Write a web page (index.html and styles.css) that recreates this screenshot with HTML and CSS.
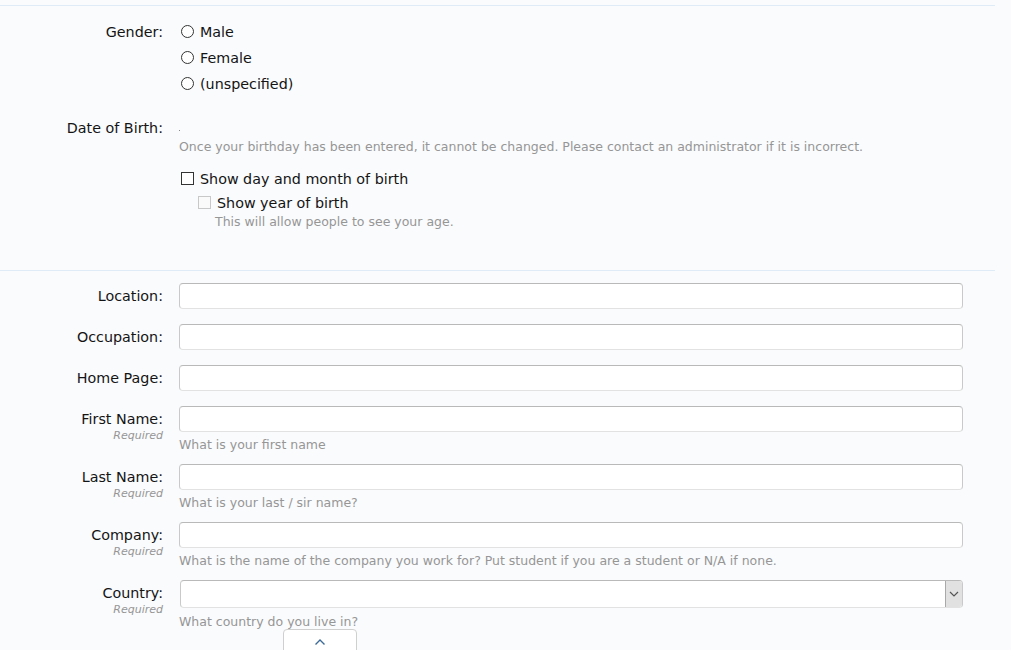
FILE: index.html
```html
<!DOCTYPE html>
<html>
<head>
<meta charset="utf-8">
<link rel="stylesheet" href="styles.css">
</head>
<body>
<div class="wrap">
  <section class="block block-top">
    <div class="row">
      <div class="label">Gender:</div>
      <div class="field">
        <div class="opt"><span class="radio"></span>Male</div>
        <div class="opt"><span class="radio"></span>Female</div>
        <div class="opt"><span class="radio"></span>(unspecified)</div>
      </div>
    </div>
    <div class="row row-dob">
      <div class="label">Date of Birth:</div>
      <div class="field">
        <div class="dob-line"><span class="dot"></span></div>
        <div class="hint">Once your birthday has been entered, it cannot be changed. Please contact an administrator if it is incorrect.</div>
        <div class="check"><span class="box"></span>Show day and month of birth</div>
        <div class="check sub"><span class="box disabled"></span>Show year of birth</div>
        <div class="hint sub-hint">This will allow people to see your age.</div>
      </div>
    </div>
  </section>
  <section class="block block-fields">
    <div class="row frow">
      <div class="label">Location:</div>
      <div class="field"><div class="input"></div></div>
    </div>
    <div class="row frow">
      <div class="label">Occupation:</div>
      <div class="field"><div class="input"></div></div>
    </div>
    <div class="row frow">
      <div class="label">Home Page:</div>
      <div class="field"><div class="input"></div></div>
    </div>
    <div class="row frow">
      <div class="label">First Name:<span class="req">Required</span></div>
      <div class="field"><div class="input"></div><div class="hint">What is your first name</div></div>
    </div>
    <div class="row frow">
      <div class="label">Last Name:<span class="req">Required</span></div>
      <div class="field"><div class="input"></div><div class="hint">What is your last / sir name?</div></div>
    </div>
    <div class="row frow">
      <div class="label">Company:<span class="req">Required</span></div>
      <div class="field"><div class="input"></div><div class="hint">What is the name of the company you work for? Put student if you are a student or N/A if none.</div></div>
    </div>
    <div class="row frow">
      <div class="label">Country:<span class="req">Required</span></div>
      <div class="field">
        <div class="select"><span class="arrow"><svg width="10" height="6" viewBox="0 0 10 6"><polyline points="1,1 5,5 9,1" fill="none" stroke="#555" stroke-width="1.2"/></svg></span></div>
        <div class="hint">What country do you live in?</div>
      </div>
    </div>
  </section>
</div>
<div class="totop"><svg width="12" height="8" viewBox="0 0 12 8"><polyline points="1.5,6.5 6,2 10.5,6.5" fill="none" stroke="#3c6a98" stroke-width="1.4"/></svg></div>
</body>
</html>
```
FILE: styles.css
```css
html, body {
  margin: 0;
  padding: 0;
  background: #fafbfd;
  height: 100%;
  overflow: hidden;
}
body {
  font-family: "DejaVu Sans", Verdana, sans-serif;
  font-size: 14.3px;
  color: #141414;
}
.wrap {
  width: 995px;
  padding-top: 5px;
}
.block {
  border-top: 1px solid #dfecf7;
}
.block-top {
  padding-top: 13px;
  box-sizing: border-box;
  height: 265px;
}
.row {
  display: grid;
  grid-template-columns: 163px 1fr;
  column-gap: 16px;
}
.label {
  text-align: right;
  line-height: 26px;
  display: flex;
  flex-direction: column;
  align-items: flex-end;
}
.field {
  width: 784px;
}
.opt {
  height: 26px;
  display: flex;
  align-items: center;
  line-height: 26px;
}
.radio {
  width: 11px;
  height: 11px;
  border: 1px solid #333;
  border-radius: 50%;
  background: #fff;
  margin: 0 6px 0 2px;
  position: relative;
  top: -1px;
}
.row-dob {
  margin-top: 18px;
}
.dob-line {
  height: 24px;
  position: relative;
}
.dot {
  display: block;
  width: 1px;
  height: 1px;
  background: #888;
  position: absolute;
  left: 0;
  top: 15px;
}
.hint {
  font-size: 12.5px;
  color: #969696;
  line-height: 16px;
  white-space: nowrap;
}
.check {
  height: 24px;
  display: flex;
  align-items: center;
}
.dob-line + .hint + .check {
  margin-top: 12px;
}
.box {
  width: 11px;
  height: 11px;
  border: 1px solid #333;
  background: #fff;
  margin: 0 6px 0 2px;
  position: relative;
  top: -1px;
}
.box.disabled {
  border-color: #c8c8c8;
  background: #fafafa;
}
.check.sub {
  padding-left: 17px;
}
.sub-hint {
  padding-left: 36px;
  line-height: 14px;
}
.block-fields {
  padding-top: 12px;
}
.frow {
  margin-bottom: 15px;
}
.frow:nth-child(n+4) {
  margin-bottom: 11px;
}
.input {
  height: 24px;
  border: 1px solid #c9c9c9;
  border-top-color: #b9b9b9;
  border-bottom-color: #e2e2e2;
  border-radius: 4px;
  background: #fff;
}
.field .input + .hint {
  margin-top: 5px;
}
.req {
  font-size: 11px;
  font-style: italic;
  color: #969696;
  line-height: 12px;
  margin-top: -2px;
}
.select {
  height: 26px;
  margin-left: 1px;
  border: 1px solid #c9c9c9;
  border-top-color: #b9b9b9;
  border-bottom-color: #e2e2e2;
  border-radius: 4px;
  background: #fff;
  display: flex;
  justify-content: flex-end;
}
.arrow {
  width: 16px;
  height: 26px;
  background: #e1e1e1;
  border-left: 1px solid #a9a9a9;
  border-radius: 0 3px 3px 0;
  display: flex;
  align-items: center;
  justify-content: center;
}
.select + .hint {
  margin-top: 6px;
}
.totop {
  position: fixed;
  left: 283px;
  top: 629px;
  width: 74px;
  height: 30px;
  background: #fff;
  border: 1px solid #cfcfcf;
  border-radius: 4px 4px 0 0;
  display: flex;
  justify-content: center;
  padding-top: 8px;
  box-sizing: border-box;
}
```
